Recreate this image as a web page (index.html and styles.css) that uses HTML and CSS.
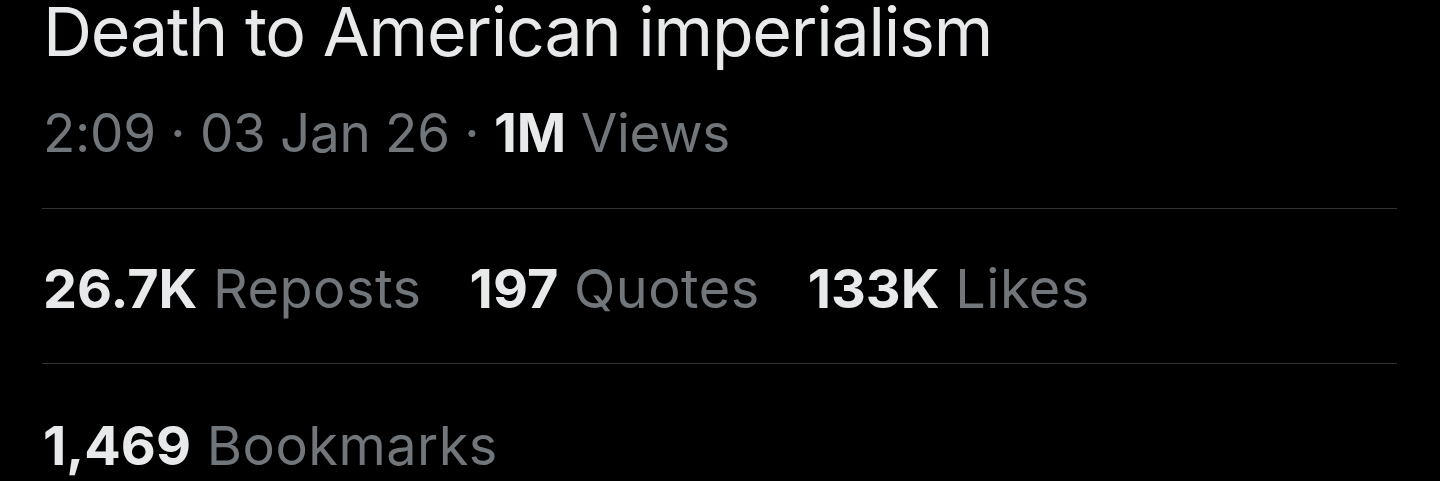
FILE: index.html
```html
<!DOCTYPE html>
<html lang="en">
<head>
    <meta charset="UTF-8">
    <meta name="viewport" content="width=device-width, initial-scale=1.0">
    <title>Post</title>
    <link rel="stylesheet" href="styles.css">
</head>
<body>
    <div class="post">
        <div class="post-text">Death to American imperialism</div>

        <div class="post-meta">
            <span>2:09</span>
            <span>·</span>
            <span>03 Jan 26</span>
            <span>·</span>
            <span><strong>1M</strong> Views</span>
        </div>

        <div class="stats">
            <div class="stat"><strong>26.7K</strong> Reposts</div>
            <div class="stat"><strong>197</strong> Quotes</div>
            <div class="stat"><strong>133K</strong> Likes</div>
        </div>

        <div class="stats last">
            <div class="stat"><strong>1,469</strong> Bookmarks</div>
        </div>
    </div>
</body>
</html>
```

FILE: styles.css
```css
* {
    margin: 0;
    padding: 0;
    box-sizing: border-box;
}

body {
    font-family: Inter, 'Noto Sans', sans-serif;
    background: #000;
    color: #71767b;
    height: 481px;
    overflow: hidden;
}

.post {
    padding: 0 43px 0 42px;
}

.post-text {
    color: #e7e9ea;
    font-size: 68px;
    line-height: 62px;
    letter-spacing: -1.2px;
    padding-left: 1px;
}

.post-meta {
    font-size: 53px;
    line-height: 64px;
    letter-spacing: -0.3px;
    padding: 39px 0 43px 1px;
    border-bottom: 1px solid #2f3336;
}

.post-meta strong,
.stat strong {
    color: #e7e9ea;
    font-weight: 700;
    letter-spacing: 0;
}

.stats {
    display: flex;
    gap: 48px;
    font-size: 54px;
    line-height: 64px;
    letter-spacing: 0.5px;
    padding: 48px 0 42px 1px;
    border-bottom: 1px solid #2f3336;
}

.stats.last {
    padding-top: 50px;
    border-bottom: none;
}
```
